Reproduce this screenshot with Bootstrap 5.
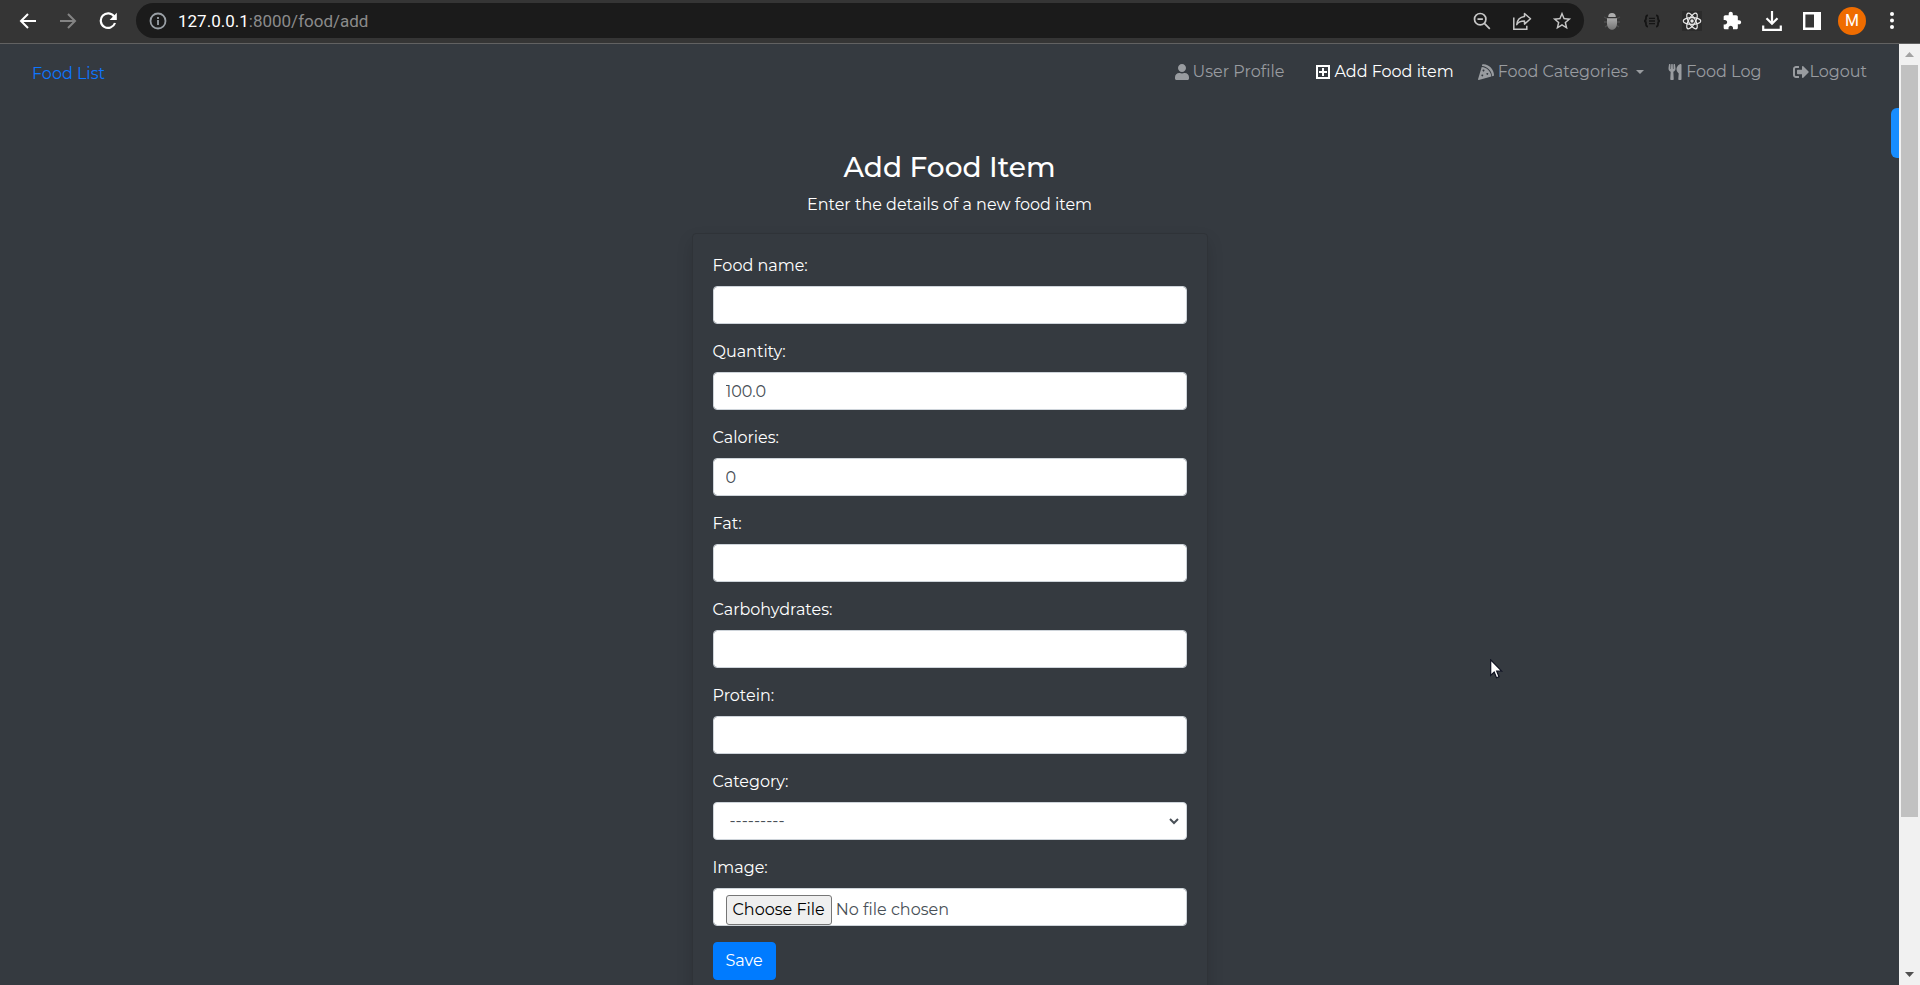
<!DOCTYPE html>
<html lang="en">
<head>
<meta charset="utf-8">
<meta name="viewport" content="width=device-width, initial-scale=1">
<title>Add Food Item</title>
<link href="https://cdn.jsdelivr.net/npm/bootstrap@5.3.0/dist/css/bootstrap.min.css" rel="stylesheet">
<style>
  body { font-family: Montserrat, Inter, sans-serif; font-size: 16px; line-height: 24px; background: #353a40; color: #fff; }

  /* Browser toolbar */
  .toolbar { height: 44px; background: #353535; border-bottom: 1px solid #626262; padding: 0 16px 2px; }
  .tool { display: flex; align-items: center; justify-content: center; width: 24px; height: 32px; padding: 0; border: 0; background: none; color: #fff; flex: none; }
  .tool svg { display: block; flex: none; }
  .tool.dim { color: #848484; }
  .tool.soft { color: #c7c7c7; }
  .omnibox { height: 35px; background: #1b1b1b; border-radius: 18px; padding: 0 10px; }
  .address { font-family: Roboto, sans-serif; font-size: 17px; color: #8b8b8b; margin-left: -8px; }
  .address b { color: #fff; font-weight: 400; }
  .avatar { width: 28px; height: 28px; margin: 0 -2px; border-radius: 50%; background: #ef6c00; font: 16px Roboto, sans-serif; }

  /* Site navigation */
  .site-nav { padding: 16px 32px 0; }
  .home-link { color: #0d76ff; text-decoration: none; padding-top: 2px; }
  .menu a { display: flex; align-items: center; color: #999ca0; text-decoration: none; white-space: nowrap; }
  .menu a.active { color: #fff; }
  .menu svg { fill: currentColor; flex: none; }
  .caret { border: 4px solid transparent; border-top-color: currentColor; border-bottom: 0; margin-left: 4px; }
  .side-handle { position: absolute; right: 0; top: 64px; width: 8px; height: 50px; padding: 0; border: 0; border-radius: 6px 0 0 6px; background: #178dff; }

  /* Form */
  .form-col { width: 516px; max-width: 100%; padding-top: 65px; }
  .form-title { font-size: 28px; line-height: 32px; font-weight: 500; margin-bottom: 10px; }
  .food-card { background: #353a40; color: #fff; border: 1px solid #2f3338; border-radius: 4px; padding: 20px; box-shadow: 0 8px 16px rgba(0,0,0,.15); }
  .food-card .form-control { height: 38px; border: 1px solid #ced4da; border-radius: 4px; background-color: #fff; color: #495057; padding: 6px 12px; line-height: 24px; }
  .food-card select.form-control { padding-left: 16px; background: #fff url("data:image/svg+xml,%3Csvg xmlns='http://www.w3.org/2000/svg' width='10' height='7' viewBox='0 0 10 7'%3E%3Cpath d='M1 1l4 4 4-4' fill='none' stroke='%23495057' stroke-width='2'/%3E%3C/svg%3E") no-repeat right 7px center; }
  .food-card input[type=file]::file-selector-button { appearance: none; margin: 0 4px 0 0; padding: 2px 6px; border: 1px solid #767676; border-radius: 3px; background: #efefef; color: #000; line-height: 24px; }
  .save-btn { --bs-btn-bg: #007bff; --bs-btn-border-color: #007bff; border-radius: 4px; height: 38px; }

  /* Scroll track */
  .track { width: 21px; flex: none; background: #f1f1f1; padding: 0 2px; }
  .track-end { height: 21px; flex: none; }
  .thumb { background: #c1c1c1; flex: 752; width: 17px; }
  .rest { flex: 147; }
  .pointer { position: absolute; left: 1490px; top: 615px; }
</style>
</head>
<body class="d-flex flex-column vh-100 overflow-hidden">

<header class="toolbar d-flex align-items-center gap-3 flex-shrink-0">
  <button class="tool" aria-label="Back"><svg width="18" height="18" viewBox="0 0 18 18" fill="none" stroke="currentColor" stroke-width="2"><path d="M17 9H2M9 2L2 9l7 7"/></svg></button>
  <button class="tool dim" aria-label="Forward"><svg width="18" height="18" viewBox="0 0 18 18" fill="none" stroke="currentColor" stroke-width="2"><path d="M1 9h15M9 2l7 7-7 7"/></svg></button>
  <button class="tool" aria-label="Reload"><svg width="18" height="18" viewBox="0 0 18 18" fill="none" stroke="currentColor" stroke-width="2.2"><path d="M15.2 4.6A7.3 7.3 0 1 0 16 11"/><path d="M17.8.8v7.2h-7.2z" fill="currentColor" stroke="none"/></svg></button>
  <div class="omnibox d-flex align-items-center gap-3 flex-fill">
    <button class="tool dim" aria-label="Site information"><svg width="18" height="18" viewBox="0 0 18 18" fill="none" stroke="#9aa0a6" stroke-width="1.8"><circle cx="9" cy="9" r="7.5"/><path d="M9 8v5M9 5v2"/></svg></button>
    <span class="address flex-fill"><b>127.0.0.1</b>:8000/food/add</span>
    <button class="tool soft" aria-label="Zoom"><svg width="18" height="18" viewBox="0 0 18 18" fill="none" stroke="currentColor" stroke-width="1.7"><circle cx="7.2" cy="7.2" r="5.7"/><path d="M4.5 7.2h5.4M11.4 11.4l5.4 5.4"/></svg></button>
    <button class="tool soft" aria-label="Share"><svg width="20" height="20" viewBox="0 0 20 20" fill="none" stroke="currentColor" stroke-width="1.5"><path d="M1.8 6.5v11.8h13v-3.5"/><path d="M12.5 2.5l6 5.3-6 5.3v-3c-3.600 0-6.300 1-7.800 3.600.4-4.600 3-7.700 7.800-8.300z" stroke-linejoin="round"/></svg></button>
    <button class="tool soft" aria-label="Bookmark"><svg width="22" height="22" viewBox="0 0 24 24" fill="currentColor"><path d="M22 9.240l-7.190-.62L12 2 9.190 8.630 2 9.240l5.460 4.730L5.820 21 12 17.270 18.180 21l-1.630-7.030L22 9.240zM12 15.400l-3.760 2.270 1-4.280-3.320-2.880 4.380-.38L12 6.100l1.710 4.040 4.380.38-3.320 2.880 1 4.280L12 15.400z"/></svg></button>
  </div>
  <button class="tool" aria-label="Bug extension"><svg width="18" height="18" viewBox="0 0 18 18"><defs><linearGradient id="shell" x1="0" y1="0" x2="0" y2="1"><stop offset="0" stop-color="#ababab"/><stop offset="1" stop-color="#747474"/></linearGradient></defs><path d="M1 5l4 2M1 10h3M2 15l3-2M17 5l-4 2M17 10h-3M16 15l-3-2" stroke="#4d4d4d" stroke-width="1.3"/><path d="M5.200 5a3.800 4 0 0 1 7.600 0z" fill="#aeaeae"/><path d="M4 6.200h10v5c0 4-2.300 6.500-5 6.500s-5-2.500-5-6.500z" fill="url(#shell)"/></svg></button>
  <button class="tool" aria-label="JSON extension"><svg width="18" height="14" viewBox="0 0 18 14" fill="none" stroke="#151515" stroke-width="1.8"><path d="M5 1.500c-2 0-2 .8-2 2.500S3 7 1 7c2 0 2 1.300 2 3s0 2.500 2 2.500M13 1.500c2 0 2 .8 2 2.500s0 3 2 3c-2 0-2 1.300-2 3s0 2.500-2 2.500"/><path d="M6 4.300h6M6 7h6M6 9.700h6" stroke-width="1.3"/></svg></button>
  <button class="tool" aria-label="React extension"><svg width="20" height="20" viewBox="0 0 20 20" fill="none" stroke="#e8e8e8" stroke-width="1.2"><rect width="20" height="20" fill="#2b2b2b" stroke="none"/><ellipse cx="10" cy="10" rx="8.800" ry="3.400"/><ellipse cx="10" cy="10" rx="8.800" ry="3.400" transform="rotate(60 10 10)"/><ellipse cx="10" cy="10" rx="8.800" ry="3.400" transform="rotate(120 10 10)"/><circle cx="10" cy="10" r="1.700" fill="#e8e8e8" stroke="none"/></svg></button>
  <button class="tool" aria-label="Extensions"><svg width="20" height="20" viewBox="0 0 24 24" fill="currentColor"><path d="M20.500 11H19V7c0-1.100-.9-2-2-2h-4V3.500C13 2.120 11.880 1 10.500 1S8 2.120 8 3.500V5H4c-1.100 0-1.990.9-1.990 2v3.800H3.500c1.490 0 2.700 1.210 2.700 2.700s-1.210 2.700-2.700 2.700H2V20c0 1.100.9 2 2 2h3.800v-1.500c0-1.490 1.210-2.700 2.700-2.700 1.490 0 2.700 1.210 2.700 2.700V22H17c1.100 0 2-.9 2-2v-4h1.500c1.380 0 2.500-1.120 2.500-2.500S21.880 11 20.500 11z"/></svg></button>
  <button class="tool" aria-label="Downloads"><svg width="20" height="20" viewBox="0 0 20 20" fill="none" stroke="currentColor" stroke-width="2.2"><path d="M10 0v12M4.500 7.300l5.500 5.500 5.500-5.500M1.200 14.500v4.300h17.600v-4.300"/></svg></button>
  <button class="tool" aria-label="Side panel"><svg width="18" height="18" viewBox="0 0 18 18"><path d="M1.200 1.200h15.600v15.600H1.200z" fill="none" stroke="#fff" stroke-width="2.4"/><path d="M11 1h6v16h-6z" fill="#fff"/></svg></button>
  <button class="tool avatar" aria-label="Profile">M</button>
  <button class="tool" aria-label="Menu"><svg width="4" height="17" viewBox="0 0 4 17" fill="currentColor"><circle cx="2" cy="2" r="2"/><circle cx="2" cy="8.500" r="2"/><circle cx="2" cy="15" r="2"/></svg></button>
</header>

<div class="d-flex flex-fill overflow-hidden">
  <div class="flex-fill position-relative overflow-hidden">
    <nav class="site-nav d-flex justify-content-between align-items-start">
      <a class="home-link" href="#">Food List</a>
      <div class="menu d-flex gap-4">
        <a class="gap-1 me-2" href="#"><svg width="14" height="16" viewBox="0 0 448 512"><path d="M224 256c70.700 0 128-57.300 128-128S294.700 0 224 0 96 57.300 96 128s57.300 128 128 128zm89.600 32h-16.700c-22.200 10.200-46.900 16-72.900 16s-50.600-5.800-72.900-16h-16.700C60.200 288 0 348.200 0 422.400V464c0 26.500 21.500 48 48 48h352c26.500 0 48-21.500 48-48v-41.600c0-74.200-60.200-134.400-134.400-134.400z"/></svg>User Profile</a>
        <a class="gap-1 active" href="#"><svg width="14" height="14" viewBox="0 0 14 14"><path d="M0 0h14v14H0zM2 2v10h10V2z" fill-rule="evenodd"/><path d="M6 3h2v3h3v2H8v3H6V8H3V6h3z"/></svg>Add Food item</a>
        <a class="gap-1" href="#"><svg width="16" height="16" viewBox="0 0 16 16"><path d="M4.700.2C10.500-.4 15.900 5 16 11.100c0 .6-.4 1-.9 1l-1 .1C13.800 7 9.200 2.300 4 2.100L4.100.900c0-.4.300-.7.600-.7z"/><path fill-rule="evenodd" d="M3.700 2.900c5 .2 9.400 4.700 9.700 9.500L.8 15.900a.6.600 0 0 1-.7-.8zM5.500 5.600a.9.900 0 1 0 .01 0zM9.300 8.900a.9.900 0 1 0 .01 0zM4.300 10.500a.9.900 0 1 0 .01 0z"/></svg>Food Categories <span class="caret"></span></a>
        <a class="gap-1 me-2" href="#"><svg width="14" height="16" viewBox="0 0 416 512"><path d="M207.900 15.200c.8 4.700 16.100 94.500 16.100 128.800 0 52.300-27.800 89.600-68.900 104.600L168 486.700c.7 13.700-10.200 25.300-24 25.300H80c-13.700 0-24.700-11.500-24-25.300l12.900-238.100C27.700 233.600 0 196.200 0 144 0 109.600 15.300 19.900 16.100 15.200 19.300-5.100 61.400-5.400 64 16.300v141.200c1.300 3.400 15.100 3.200 16 0 1.400-25.300 7.900-139.200 8-141.800 3.300-20.800 44.700-20.800 47.900 0 .2 2.700 6.600 116.500 8 141.800.9 3.200 14.800 3.400 16 0V16.300c2.600-21.600 44.800-21.400 48-1.100zm119.200 285.700l-15 185.100c-1.200 14 9.900 26 23.900 26h56c13.300 0 24-10.700 24-24V24c0-13.200-10.700-24-24-24-82.500 0-221.400 178.500-64.900 300.900z"/></svg>Food Log</a>
        <a href="#"><svg width="16" height="16" viewBox="0 0 512 512"><path d="M497 273L329 441c-15 15-41 4.500-41-17v-96H152c-13.300 0-24-10.700-24-24v-96c0-13.300 10.700-24 24-24h136V88c0-21.400 25.900-32 41-17l168 168c9.300 9.400 9.300 24.600 0 34zM192 436v-40c0-6.600-5.400-12-12-12H96c-17.700 0-32-14.300-32-32V160c0-17.700 14.300-32 32-32h84c6.600 0 12-5.400 12-12V76c0-6.600-5.400-12-12-12H96c-53 0-96 43-96 96v192c0 53 43 96 96 96h84c6.600 0 12-5.400 12-12z"/></svg>Logout</a>
      </div>
    </nav>
    <button class="side-handle" aria-label="Show panel"></button>

    <main class="form-col mx-auto">
      <h1 class="form-title text-center">Add Food Item</h1>
      <p class="text-center mb-3">Enter the details of a new food item</p>
      <form class="food-card">
        <div class="mb-3"><label class="d-block mb-2" for="food-name">Food name:</label><input class="form-control" id="food-name" type="text"></div>
        <div class="mb-3"><label class="d-block mb-2" for="quantity">Quantity:</label><input class="form-control" id="quantity" type="text" value="100.0"></div>
        <div class="mb-3"><label class="d-block mb-2" for="calories">Calories:</label><input class="form-control" id="calories" type="text" value="0"></div>
        <div class="mb-3"><label class="d-block mb-2" for="fat">Fat:</label><input class="form-control" id="fat" type="text"></div>
        <div class="mb-3"><label class="d-block mb-2" for="carbs">Carbohydrates:</label><input class="form-control" id="carbs" type="text"></div>
        <div class="mb-3"><label class="d-block mb-2" for="protein">Protein:</label><input class="form-control" id="protein" type="text"></div>
        <div class="mb-3"><label class="d-block mb-2" for="category">Category:</label><select class="form-control" id="category"><option>---------</option></select></div>
        <div class="mb-3"><label class="d-block mb-2" for="image">Image:</label><input class="form-control" id="image" type="file"></div>
        <button class="btn btn-primary save-btn" type="submit">Save</button>
      </form>
    </main>
    <svg class="pointer" width="13" height="20" viewBox="0 0 13 20"><path d="M.7.900v15.500l3.500-3.300 2.300 5.600 2.500-1-2.300-5.500h5z" fill="#fff" stroke="#0d1020" stroke-width="1.2"/></svg>
  </div>

  <div class="track d-flex flex-column" aria-hidden="true">
    <div class="track-end d-flex align-items-center justify-content-center"><svg width="9" height="5" viewBox="0 0 9 5"><path d="M0 5L4.500 0 9 5z" fill="#a3a3a3"/></svg></div>
    <div class="thumb"></div>
    <div class="rest"></div>
    <div class="track-end d-flex align-items-center justify-content-center"><svg width="9" height="5" viewBox="0 0 9 5"><path d="M0 0h9L4.500 5z" fill="#505050"/></svg></div>
  </div>
</div>
<script src="https://cdn.jsdelivr.net/npm/bootstrap@5.3.0/dist/js/bootstrap.bundle.min.js"></script>
</body>
</html>
